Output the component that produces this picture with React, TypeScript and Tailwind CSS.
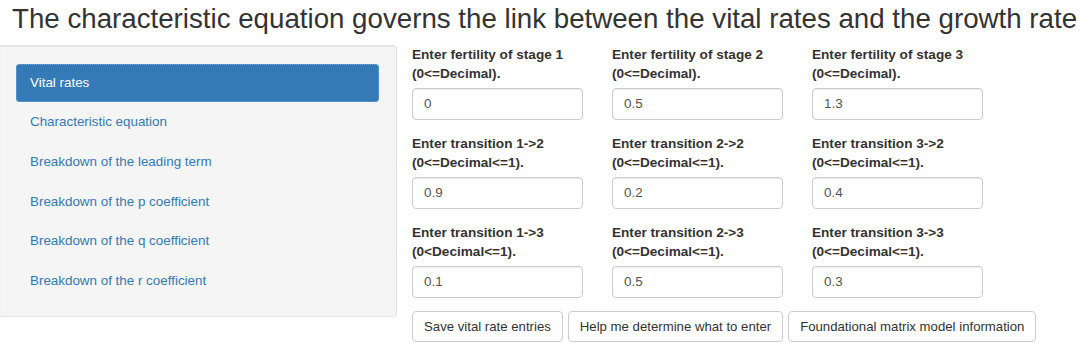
import React from 'react';

const navItems = [
  'Vital rates',
  'Characteristic equation',
  'Breakdown of the leading term',
  'Breakdown of the p coefficient',
  'Breakdown of the q coefficient',
  'Breakdown of the r coefficient',
];

const fields = [
  { label: 'Enter fertility of stage 1', range: '(0<=Decimal).', value: '0' },
  { label: 'Enter fertility of stage 2', range: '(0<=Decimal).', value: '0.5' },
  { label: 'Enter fertility of stage 3', range: '(0<=Decimal).', value: '1.3' },
  { label: 'Enter transition 1->2', range: '(0<=Decimal<=1).', value: '0.9' },
  { label: 'Enter transition 2->2', range: '(0<=Decimal<=1).', value: '0.2' },
  { label: 'Enter transition 3->2', range: '(0<=Decimal<=1).', value: '0.4' },
  { label: 'Enter transition 1->3', range: '(0<Decimal<=1).', value: '0.1' },
  { label: 'Enter transition 2->3', range: '(0<=Decimal<=1).', value: '0.5' },
  { label: 'Enter transition 3->3', range: '(0<=Decimal<=1).', value: '0.3' },
];

const buttons = ['Save vital rate entries', 'Help me determine what to enter', 'Foundational matrix model information'];

export default function App() {
  return (
    <div className="w-[1090px] h-[354px] overflow-hidden bg-white text-[#333] font-['Liberation_Sans',Arial,sans-serif]">
      <h2 className="pl-[12px] pt-[4px] mb-[10.2px] text-[27.7px] leading-[30.8px] font-normal whitespace-nowrap">
        The characteristic equation governs the link between the vital rates and the growth rate
      </h2>
      <div className="flex items-start">
        {/* sidebar */}
        <div className="w-[397px] h-[272px] bg-[#f5f5f5] border border-l-0 border-[#e3e3e3] rounded-r-[4px] shadow-[inset_0_1px_1px_rgba(0,0,0,0.05)] pl-[16px] pr-[17px] pt-[18px]">
          <div className="flex flex-col gap-[1.9px]">
            {navItems.map((item, i) => (
              <div
                key={item}
                className={
                  i === 0
                    ? 'h-[37.7px] flex items-center px-[14px] rounded-[4px] bg-[#337ab7] text-white text-[13.4px] outline-1 outline-dotted outline-[#6fa8dc] -outline-offset-1'
                    : 'h-[37.7px] flex items-center px-[14px] rounded-[4px] text-[#337ab7] text-[13.4px]'
                }
              >
                {item}
              </div>
            ))}
          </div>
        </div>

        {/* main form */}
        <div className="ml-[15px]">
          <div className="grid grid-cols-[200px_200px_200px]">
            {fields.map((f) => (
              <div key={f.label} className="mb-[14px]">
                <div className="text-[13.6px] leading-[19px] font-bold mb-[5px] whitespace-nowrap">
                  {f.label}
                  <br />
                  {f.range}
                </div>
                <div className="w-[171px] h-[32px] flex items-center px-[11px] border border-[#ccc] rounded-[4px] bg-white shadow-[inset_0_1px_1px_rgba(0,0,0,0.075)] text-[13.4px] text-[#555]">
                  {f.value}
                </div>
              </div>
            ))}
          </div>
          <div className="flex gap-[5px] -mt-[1px]">
            {buttons.map((b) => (
              <button
                key={b}
                className="h-[31px] px-[11px] border border-[#ccc] rounded-[4px] bg-white text-[13.2px] text-[#333] whitespace-nowrap"
              >
                {b}
              </button>
            ))}
          </div>
        </div>
      </div>
    </div>
  );
}
